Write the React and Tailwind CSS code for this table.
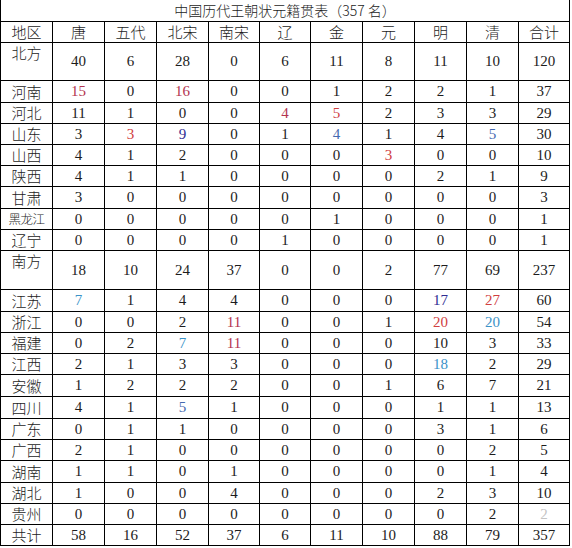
import React from 'react'

const COLS = [
  'w-[52px]', 'w-[52px]', 'w-[52px]', 'w-[52px]', 'w-[51px]', 'w-[51px]',
  'w-[52px]', 'w-[52px]', 'w-[52px]', 'w-[52px]', 'w-[51px]',
]

const TONE = {
  r: 'text-[#b3344f]',
  red: 'text-[#d0403f]',
  b: 'text-[#4469b0]',
  db: 'text-[#2f2c92]',
  lb: 'text-[#3b92c8]',
  fade: 'text-[#c4c4c4]',
}

const HEADER = ['地区', '唐', '五代', '北宋', '南宋', '辽', '金', '元', '明', '清', '合计']

// each value may be a number or [number, tone]
const ROWS = [
  { name: '北方', h: 'h-[38px]', top: true, v: [40, 6, 28, 0, 6, 11, 8, 11, 10, 120] },
  { name: '河南', h: 'h-[22px]', v: [[15, 'r'], 0, [16, 'r'], 0, 0, 1, 2, 2, 1, 37] },
  { name: '河北', h: 'h-[21px]', v: [11, 1, 0, 0, [4, 'r'], [5, 'red'], 2, 3, 3, 29] },
  { name: '山东', h: 'h-[21px]', v: [3, [3, 'red'], [9, 'db'], 0, 1, [4, 'b'], 1, 4, [5, 'b'], 30] },
  { name: '山西', h: 'h-[21px]', v: [4, 1, 2, 0, 0, 0, [3, 'red'], 0, 0, 10] },
  { name: '陕西', h: 'h-[21px]', v: [4, 1, 1, 0, 0, 0, 0, 2, 1, 9] },
  { name: '甘肃', h: 'h-[22px]', v: [3, 0, 0, 0, 0, 0, 0, 0, 0, 3] },
  { name: '黑龙江', h: 'h-[21px]', small: true, v: [0, 0, 0, 0, 0, 1, 0, 0, 0, 1] },
  { name: '辽宁', h: 'h-[21px]', v: [0, 0, 0, 0, 1, 0, 0, 0, 0, 1] },
  { name: '南方', h: 'h-[39px]', top: true, v: [18, 10, 24, 37, 0, 0, 2, 77, 69, 237] },
  { name: '江苏', h: 'h-[22px]', v: [[7, 'lb'], 1, 4, 4, 0, 0, 0, [17, 'db'], [27, 'red'], 60] },
  { name: '浙江', h: 'h-[21px]', v: [0, 0, 2, [11, 'r'], 0, 0, 1, [20, 'red'], [20, 'lb'], 54] },
  { name: '福建', h: 'h-[21px]', v: [0, 2, [7, 'lb'], [11, 'r'], 0, 0, 0, 10, 3, 33] },
  { name: '江西', h: 'h-[21px]', v: [2, 1, 3, 3, 0, 0, 0, [18, 'lb'], 2, 29] },
  { name: '安徽', h: 'h-[22px]', v: [1, 2, 2, 2, 0, 0, 1, 6, 7, 21] },
  { name: '四川', h: 'h-[22px]', v: [4, 1, [5, 'b'], 1, 0, 0, 0, 1, 1, 13] },
  { name: '广东', h: 'h-[21px]', v: [0, 1, 1, 0, 0, 0, 0, 3, 1, 6] },
  { name: '广西', h: 'h-[21px]', v: [2, 1, 0, 0, 0, 0, 0, 0, 2, 5] },
  { name: '湖南', h: 'h-[22px]', v: [1, 1, 0, 1, 0, 0, 0, 0, 1, 4] },
  { name: '湖北', h: 'h-[21px]', v: [1, 0, 0, 4, 0, 0, 0, 2, 3, 10] },
  { name: '贵州', h: 'h-[21px]', v: [0, 0, 0, 0, 0, 0, 0, 0, 2, [2, 'fade']] },
  { name: '共计', h: 'h-[21px]', v: [58, 16, 52, 37, 6, 11, 10, 88, 79, 357] },
]

const CJK = "font-['Noto_Sans_CJK_SC','Noto_Sans',sans-serif] font-light"
const NUM = "font-['Liberation_Serif','Times_New_Roman',serif]"

function Cell({ col, className = '', children }) {
  return (
    <div className={`${COLS[col]} shrink-0 flex justify-center border-r border-b border-black ${className}`}>
      {children}
    </div>
  )
}

export default function App() {
  return (
    <div className="w-[572px] h-[548px] bg-white text-[#1c1c1c]">
      <div className="w-[570px] border-l border-black">
        <div className={`h-[22px] flex items-center justify-center border-r border-b border-black text-[14px] ${CJK}`}>
          中国历代王朝状元籍贯表（357 名）
        </div>

        <div className="flex h-[21px]">
          {HEADER.map((t, i) => (
            <Cell key={t} col={i} className={`items-center text-[15px] ${CJK}`}>
              {t}
            </Cell>
          ))}
        </div>

        {ROWS.map((row) => (
          <div key={row.name} className={`flex ${row.h}`}>
            <Cell
              col={0}
              className={`${row.top ? 'items-start' : 'items-center'} ${row.small ? 'text-[12.5px] tracking-[-0.5px]' : 'text-[15px]'} leading-[20px] ${CJK}`}
            >
              {row.name}
            </Cell>
            {row.v.map((val, i) => {
              const [n, tone] = Array.isArray(val) ? val : [val, null]
              return (
                <Cell key={i} col={i + 1} className={`items-center text-[15px] ${NUM} ${tone ? TONE[tone] : ''}`}>
                  {n}
                </Cell>
              )
            })}
          </div>
        ))}
      </div>
    </div>
  )
}
